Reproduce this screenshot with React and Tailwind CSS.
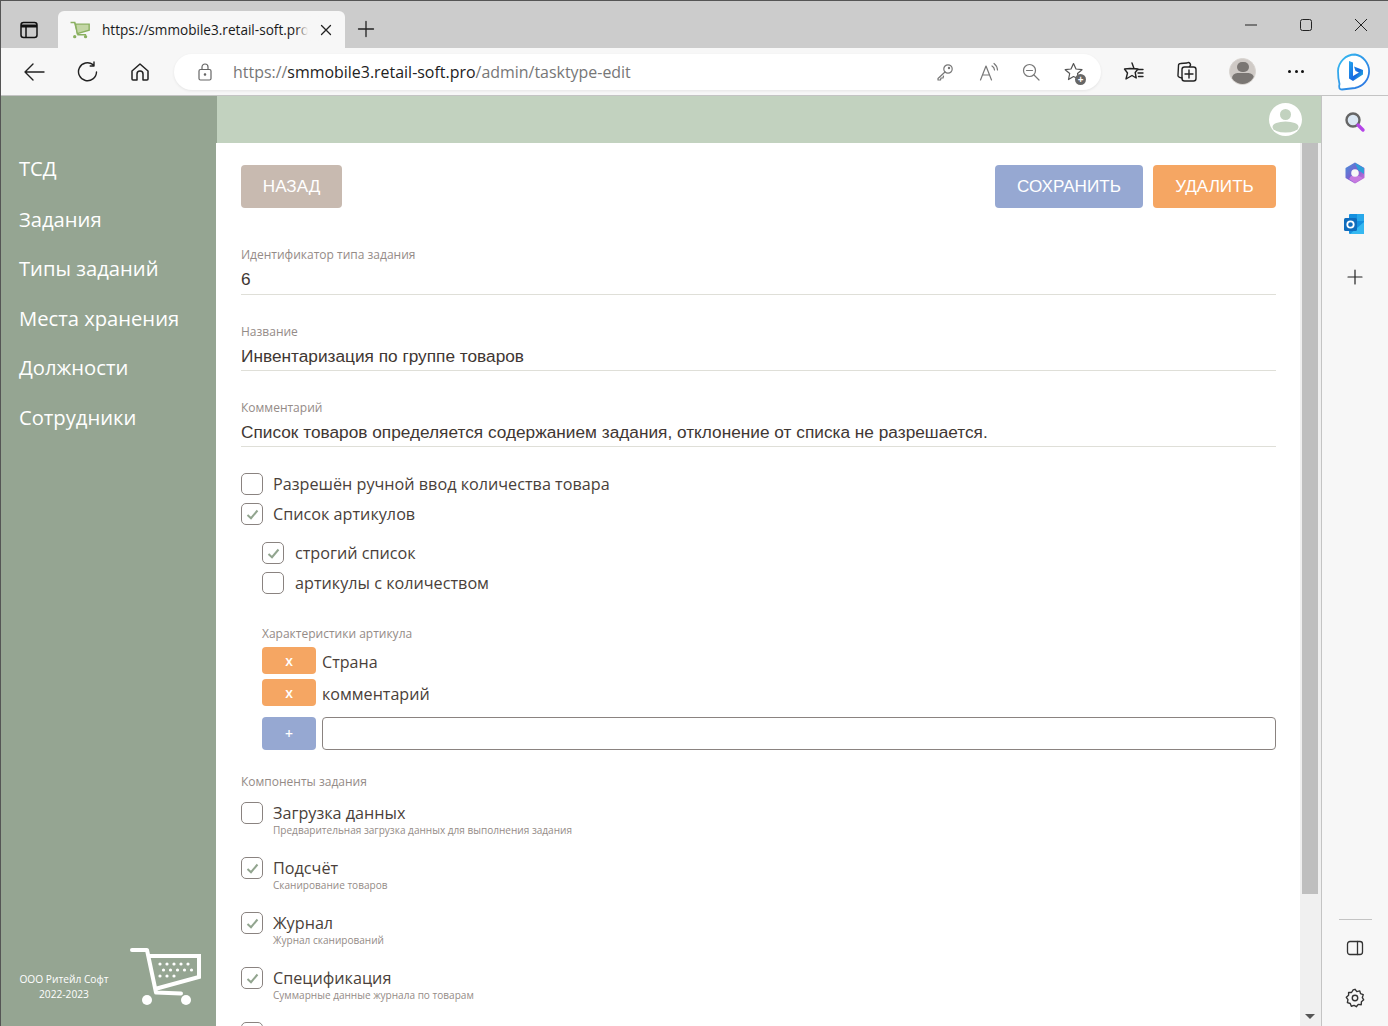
import { useState } from 'react'

const SANS = "font-['Open_Sans','Noto_Sans',sans-serif]"
const ARIAL = "font-['Liberation_Sans',sans-serif]"

const NAV = [
  { label: 'ТСД', cls: 'h-[51px] pb-[3px]' },
  { label: 'Задания', cls: 'h-[49px] pb-[1px]' },
  { label: 'Типы заданий', cls: 'h-[50px] pb-[1px]' },
  { label: 'Места хранения', cls: 'h-[49px] pb-[1px]' },
  { label: 'Должности', cls: 'h-[50px] pb-[1px]' },
  { label: 'Сотрудники', cls: 'h-[50px] pb-[2px]' },
]

const COMPONENTS = [
  { title: 'Загрузка данных', sub: 'Предварительная загрузка данных для выполнения задания', on: false },
  { title: 'Подсчёт', sub: 'Сканирование товаров', on: true },
  { title: 'Журнал', sub: 'Журнал сканирований', on: true },
  { title: 'Спецификация', sub: 'Суммарные данные журнала по товарам', on: true },
]

function Stroke({ size = 24, box = 24, width = 1.5, color = 'currentColor', children }) {
  return (
    <svg width={size} height={size} viewBox={`0 0 ${box} ${box}`} fill="none" stroke={color} strokeWidth={width} strokeLinecap="round" strokeLinejoin="round">
      {children}
    </svg>
  )
}

function CartLogo() {
  const dots = []
  for (let r = 0; r < 3; r++) {
    for (let c = 0; c < 5; c++) {
      if (r === 2 && c > 2) continue
      dots.push(<circle key={r + '-' + c} cx={30 + c * 7 + (r === 1 ? 3.5 : 0)} cy={18 + r * 6} r="1.6" fill="white" />)
    }
  }
  return (
    <svg width="72" height="60" viewBox="0 0 72 60">
      <path d="M2 4 H17 L26 46.5 L51 47.5" fill="none" stroke="white" strokeWidth="4" strokeLinecap="round" strokeLinejoin="round" />
      <path d="M19 10 H69 V31 L25 43" fill="none" stroke="white" strokeWidth="4" />
      {dots}
      <circle cx="17" cy="54" r="5" fill="white" />
      <circle cx="56" cy="54" r="5" fill="white" />
    </svg>
  )
}

function Box({ on }) {
  return (
    <span className="flex h-[22px] w-[22px] shrink-0 items-center justify-center rounded-[5px] border border-[#8a8380] bg-white">
      {on && (
        <svg width="13" height="11" viewBox="0 0 13 11" fill="none" stroke="#92a58f" strokeWidth="2">
          <path d="M1.5 6 L5 9.2 L11.5 1.5" />
        </svg>
      )}
    </span>
  )
}

function Check({ label, on, gap = 'gap-[10px]' }) {
  return (
    <label className={`flex h-[24px] items-center text-[16.2px] text-[#4a3f3a] ${gap} ${SANS}`}>
      <Box on={on} />
      <span>{label}</span>
    </label>
  )
}

function Field({ label, value, cls }) {
  return (
    <div className={`border-b border-[#dfdfd8] ${cls}`}>
      <p className={`pt-[1px] text-[12px] leading-[16px] text-[#948b87] ${SANS}`}>{label}</p>
      <p className={`mt-[4px] h-[24px] text-[17.25px] leading-[24px] text-[#3f3733] ${ARIAL}`}>{value}</p>
    </div>
  )
}

function Feature({ label }) {
  return (
    <div className="flex h-[27px] items-center gap-[6px]">
      <button className={`h-[27px] w-[54px] rounded-[4px] bg-[#f5a663] text-[14px] font-semibold text-white ${SANS}`}>x</button>
      <span className={`pt-[3px] text-[16.1px] text-[#4a3f3a] ${SANS}`}>{label}</span>
    </div>
  )
}

export default function App() {
  const [attr, setAttr] = useState('')

  return (
    <div className="flex h-[1026px] w-[1388px] flex-col overflow-hidden border-l border-t border-[#555] bg-white">
      {/* title bar */}
      <div className="flex h-[47px] shrink-0 items-end bg-[#cccccc]">
        <div className="mb-[6px] ml-[19px] mr-[18px] flex h-[24px] w-[20px] items-center">
          <svg width="18" height="18" viewBox="0 0 18 18" fill="none" stroke="#111" strokeWidth="1.5">
            <rect x="1" y="1.5" width="16" height="15" rx="2.5" />
            <path d="M1 5 H17" strokeWidth="3" />
            <path d="M6 5 V16.5" />
          </svg>
        </div>
        <div className="relative flex h-[37px] w-[287px] items-center rounded-t-[6px] bg-[#f7f7f7] pl-[12px]">
          <svg width="20" height="20" viewBox="0 0 72 60" className="shrink-0">
            <path d="M2 3 H17 L29 47 H58" fill="none" stroke="#8ab060" strokeWidth="6" />
            <path d="M20 9 H69 V31 L26 43 Z" fill="#c3d6a5" stroke="#8ab060" strokeWidth="5" />
            <circle cx="17" cy="54" r="6" fill="#8ab060" />
            <circle cx="56" cy="54" r="6" fill="#8ab060" />
          </svg>
          <span className={`ml-[12px] whitespace-nowrap pt-[1px] text-[13.6px] text-[#1a1a1a] ${SANS}`}>https://smmobile3.retail-soft.pro/</span>
          <span className="absolute left-[238px] top-0 h-full w-[24px] bg-gradient-to-r from-transparent via-[#f7f7f7] to-[#f7f7f7]" />
          <span className="absolute left-[262px] top-[13px] text-[#222]">
            <Stroke size={12} box={12} width={1.3}><path d="M1.5 1.5 L10.5 10.5 M10.5 1.5 L1.5 10.5" /></Stroke>
          </span>
        </div>
        <div className="mb-[10px] ml-[12px] flex-1 text-[#222]">
          <Stroke size={18} box={18} width={1.3}><path d="M9 1.5 V16.5 M1.5 9 H16.5" /></Stroke>
        </div>
        <div className="mb-[17px] flex items-center text-[#222]">
          <span className="flex w-[55px] justify-center"><svg width="12" height="12" viewBox="0 0 12 12" stroke="#222"><path d="M0 6 H12" /></svg></span>
          <span className="flex w-[55px] justify-center"><svg width="12" height="12" viewBox="0 0 12 12" fill="none" stroke="#222"><rect x="0.5" y="0.5" width="11" height="11" rx="2" /></svg></span>
          <span className="flex w-[55px] justify-center"><svg width="12" height="12" viewBox="0 0 12 12" fill="none" stroke="#222"><path d="M0 0 L12 12 M12 0 L0 12" /></svg></span>
        </div>
      </div>

      {/* toolbar */}
      <div className="flex h-[48px] shrink-0 items-center border-b border-[#c4c4c4] bg-[#f7f7f7]">
        <span className="ml-[22px] text-[#222]">
          <Stroke size={22} box={22} width={1.4}><path d="M2 11 H21 M10 3 L2 11 L10 19" /></Stroke>
        </span>
        <span className="ml-[32px] text-[#222]">
          <Stroke size={22} box={22} width={1.4}><path d="M19.5 11 A9 9 0 1 1 16 3.6 M17 1 V5 H13.2" /></Stroke>
        </span>
        <span className="ml-[31px] text-[#222]">
          <Stroke size={20} box={20} width={1.5}><path d="M2 9 L10 2 L18 9 V17 A1 1 0 0 1 17 18 H13 V12 A3 3 0 0 0 7 12 V18 H3 A1 1 0 0 1 2 17 Z" /></Stroke>
        </span>
        <div className="ml-[24px] flex h-[36px] w-[927px] items-center rounded-full bg-white shadow-[0_1px_3px_rgba(0,0,0,0.08)]">
          <span className="ml-[22px] text-[#666]">
            <Stroke size={18} box={18} width={1.2}><rect x="3" y="6.5" width="12" height="10.5" rx="1.5" /><path d="M6 6.5 V4 A3 3 0 0 1 12 4 V6.5" /><circle cx="9" cy="11.5" r="0.7" fill="#666" /></Stroke>
          </span>
          <span className={`ml-[19px] flex-1 pt-[2px] text-[15.95px] text-[#777] ${SANS}`}>https://<span className="text-[#222]">smmobile3.retail-soft.pro</span>/admin/tasktype-edit</span>
          <span className="text-[#777]">
            <Stroke size={18} box={18} width={1.2}><circle cx="12" cy="6" r="4.2" /><path d="M9 9 L2 15.5 V17 H4.5 L5 15 H7 L7.5 13" /><circle cx="13" cy="5" r="0.6" /></Stroke>
          </span>
          <span className="ml-[25px] text-[#777]">
            <Stroke size={20} box={20} width={1.2}><path d="M1.5 18 L7 4 L12.5 18 M3.5 13 H10.5 M13 4 A5 5 0 0 1 15.5 8 M15 1.5 A9 9 0 0 1 18.5 8" /></Stroke>
          </span>
          <span className="ml-[23px] text-[#777]">
            <Stroke size={18} box={18} width={1.2}><circle cx="7.5" cy="7.5" r="6" /><path d="M4.5 7.5 H10.5 M12 12 L17 17" /></Stroke>
          </span>
          <span className="relative ml-[24px] text-[#555]">
            <Stroke size={20} box={20} width={1.2}><path d="M9.5 1.5 L12 7 L18 7.7 L13.5 11.5 L14.5 17 L9.5 14.5 L4.5 17.5 L5.7 11.5 L1.2 7.7 L7 7 Z" /></Stroke>
            <span className="absolute -bottom-[3px] -right-[2px] flex h-[11px] w-[11px] items-center justify-center rounded-full bg-[#666] text-[10px] font-bold leading-none text-white">+</span>
          </span>
          <span className="w-[17px]" />
        </div>
        <span className="ml-[22px] text-[#222]">
          <Stroke size={22} box={22} width={1.4}><path d="M9 2 L11 7.5 L15 8 M15 8 L12.2 11.5 L13.2 17 L9 14.5 L3 18 L4.5 12 L1.5 8 L7 7.5 Z M15.5 8.5 H20 M15 12 H20 M15.5 15.5 H20" /></Stroke>
        </span>
        <span className="ml-[31px] text-[#222]">
          <Stroke size={22} box={22} width={1.4}><path d="M6 17 L3.5 16.3 A2 2 0 0 1 2 14 L2.5 4.5 A2 2 0 0 1 4.5 2.5 L11 2 A2 2 0 0 1 13.5 5.5" /><rect x="6" y="6" width="14" height="14" rx="2.5" /><path d="M13 9 V17 M9 13 H17" /></Stroke>
        </span>
        <span className="ml-[31px] flex h-[27px] w-[27px] flex-col items-center overflow-hidden rounded-full border border-[#d8d4d0] bg-[#cfcac6]">
          <span className="mt-[3px] h-[12px] w-[12px] rounded-full bg-[#7a7673]" />
          <span className="mt-[1px] h-[14px] w-[22px] rounded-full bg-[#7a7673]" />
        </span>
        <span className="ml-[32px] flex w-[16px] justify-between">
          <span className="h-[3px] w-[3px] rounded-full bg-[#111]" />
          <span className="h-[3px] w-[3px] rounded-full bg-[#111]" />
          <span className="h-[3px] w-[3px] rounded-full bg-[#111]" />
        </span>
        <span className="ml-[32px]">
          <svg width="37" height="38" viewBox="0 0 37 38">
            <defs>
              <linearGradient id="bingRing" x1="0" y1="0" x2="1" y2="1">
                <stop offset="0" stopColor="#36bdf0" />
                <stop offset="1" stopColor="#2a6fe0" />
              </linearGradient>
              <linearGradient id="bingB" x1="0" y1="0" x2="1" y2="1">
                <stop offset="0" stopColor="#23a6ee" />
                <stop offset="0.6" stopColor="#1668e0" />
                <stop offset="1" stopColor="#2bd0d8" />
              </linearGradient>
            </defs>
            <path d="M19 1.5 A17 17 0 0 1 19 35 L6 36.5 Q2 36.5 3.5 31 Q2 25 2 18 A17 17 0 0 1 19 1.5 Z" fill="white" stroke="url(#bingRing)" strokeWidth="1.8" />
            <path d="M13 8 L17 9.5 V23 L23 19.5 L19.5 18 L18 13.5 L27 17 V21.5 L17 28 L13 25.5 Z" fill="url(#bingB)" />
          </svg>
        </span>
      </div>

      {/* body */}
      <div className="flex min-h-0 flex-1">
        <aside className="flex w-[215px] shrink-0 flex-col bg-[#95a592]">
          <nav className="flex flex-col pt-[48px]">
            {NAV.map((item) => (
              <a key={item.label} className={`flex items-center pl-[18px] text-[20.2px] text-white ${item.cls} ${SANS}`}>{item.label}</a>
            ))}
          </nav>
          <div className="mt-auto flex items-end pb-[20px]">
            <div className={`mb-[4px] ml-[18px] w-[90px] text-center text-[10.2px] leading-[15px] text-white ${SANS}`}>
              <p className="whitespace-nowrap">ООО Ритейл Софт</p>
              <p>2022-2023</p>
            </div>
            <div className="ml-[21px]"><CartLogo /></div>
          </div>
        </aside>

        <div className="flex min-w-0 flex-1 flex-col">
          <header className="flex h-[47px] shrink-0 items-center justify-end border-l border-[#95a592] bg-[#c2d2bf] pr-[19px]">
            <svg width="33" height="33" viewBox="0 0 33 33">
              <circle cx="16.5" cy="16.5" r="16.5" fill="white" />
              <circle cx="16.5" cy="11.5" r="5.5" fill="#c2d2bf" />
              <ellipse cx="16.5" cy="24" rx="13" ry="5.6" fill="#c2d2bf" />
            </svg>
          </header>

          <div className="flex min-h-0 flex-1">
            <main className="min-w-0 flex-1 overflow-hidden pl-[25px] pr-[24px] pt-[22px]">
              <div className="flex h-[43px] justify-between">
                <button className={`h-[43px] w-[101px] rounded-[4px] bg-[#c8bab0] text-[17.1px] text-white ${ARIAL}`}>НАЗАД</button>
                <div className="flex gap-[10px]">
                  <button className={`h-[43px] w-[148px] rounded-[4px] bg-[#96a8d2] text-[17.1px] text-white ${ARIAL}`}>СОХРАНИТЬ</button>
                  <button className={`h-[43px] w-[123px] rounded-[4px] bg-[#f5a663] text-[17.1px] text-white ${ARIAL}`}>УДАЛИТЬ</button>
                </div>
              </div>

              <Field cls="mt-[38px] h-[49px]" label="Идентификатор типа задания" value="6" />
              <Field cls="mt-[28px] h-[48px]" label="Название" value="Инвентаризация по группе товаров" />
              <Field cls="mt-[28px] h-[48px]" label="Комментарий" value="Список товаров определяется содержанием задания, отклонение от списка не разрешается." />

              <div className="mt-[25px] flex flex-col gap-[6px]">
                <Check label="Разрешён ручной ввод количества товара" />
                <Check label="Список артикулов" on />
              </div>
              <div className="ml-[21px] mt-[15px] flex flex-col gap-[6px]">
                <Check gap="gap-[11px]" label="строгий список" on />
                <Check gap="gap-[11px]" label="артикулы с количеством" />
              </div>

              <div className="ml-[21px] mt-[31px]">
                <p className={`text-[12px] leading-[16px] text-[#948b87] ${SANS}`}>Характеристики артикула</p>
                <div className="mt-[5px] flex flex-col gap-[5px]">
                  <Feature label="Страна" />
                  <Feature label="комментарий" />
                </div>
                <div className="mt-[11px] flex h-[33px] gap-[6px]">
                  <button className={`h-[33px] w-[54px] shrink-0 rounded-[4px] bg-[#96a8d2] text-[14px] font-semibold text-white ${SANS}`}>+</button>
                  <input value={attr} onChange={(e) => setAttr(e.target.value)} className="h-[33px] min-w-0 flex-1 rounded-[4px] border border-[#8a8380] bg-white px-2 text-[16px] outline-none" />
                </div>
              </div>

              <p className={`mt-[24px] text-[12px] leading-[16px] text-[#948b87] ${SANS}`}>Компоненты задания</p>
              <div className="mt-[12px] flex flex-col gap-[21px]">
                {COMPONENTS.map((c) => (
                  <div key={c.title} className="flex h-[34px] gap-[10px]">
                    <Box on={c.on} />
                    <div className={SANS}>
                      <p className="text-[16.2px] leading-[22px] text-[#4a3f3a]">{c.title}</p>
                      <p className="text-[10.05px] leading-[12px] text-[#948b87]">{c.sub}</p>
                    </div>
                  </div>
                ))}
                <Box />
              </div>
            </main>

            {/* page scrollbar */}
            <div className="flex w-[21px] shrink-0 flex-col bg-[#f0f0f0] pl-[2px]">
              <div className="h-[751px] w-[16px] bg-[#bfbfbf]" />
              <div className="mb-[7px] ml-[3px] mt-auto h-0 w-0 border-x-[5px] border-t-[5px] border-x-transparent border-t-[#555]" />
            </div>
          </div>
        </div>

        {/* edge sidebar */}
        <div className="flex w-[67px] shrink-0 flex-col items-center border-l border-[#c4c4c4] bg-[#f7f7f7] pt-[14px]">
          <svg width="24" height="24" viewBox="0 0 24 24" fill="none">
            <circle cx="10" cy="10" r="6.5" fill="#dbe7f3" stroke="#666" strokeWidth="2.4" />
            <path d="M15 15 L20 20" stroke="#b545e8" strokeWidth="3.4" strokeLinecap="round" />
          </svg>
          <svg className="mt-[27px]" width="24" height="24" viewBox="0 0 24 24" fill="none">
            <defs>
              <linearGradient id="m365" x1="0" y1="0" x2="1" y2="1">
                <stop offset="0" stopColor="#4a8fd8" />
                <stop offset="0.5" stopColor="#7b5fd0" />
                <stop offset="1" stopColor="#d070d8" />
              </linearGradient>
            </defs>
            <path d="M12 2.5 L20.5 7.5 V16.5 L12 21.5 L3.5 16.5 V7.5 Z" fill="url(#m365)" stroke="url(#m365)" strokeWidth="2" strokeLinejoin="round" />
            <path d="M12 2 L21 7 V13 L15 9 Z" fill="#2f9fd8" />
            <path d="M8 15 L16 15 L20 17 L12 22 L6 18 Z" fill="#c77ae0" />
            <circle cx="12" cy="12" r="3.8" fill="#f7f7f7" />
          </svg>
          <svg className="mt-[27px]" width="24" height="24" viewBox="0 0 24 24" fill="none">
            <rect x="6" y="2" width="15" height="20" rx="1" fill="#1490df" />
            <path d="M14 2 H21 V9 H14 Z" fill="#28a8ea" />
            <path d="M21 10 V21 A1 1 0 0 1 20 22 H7 Z" fill="#35b8f1" />
            <rect x="1" y="6" width="13" height="13" rx="1.5" fill="#0f6cbd" />
            <circle cx="7.5" cy="12.5" r="3.2" fill="none" stroke="white" strokeWidth="1.8" />
          </svg>
          <span className="mt-[33px] text-[#222]">
            <Stroke size={16} box={16} width={1.2}><path d="M8 1 V15 M1 8 H15" /></Stroke>
          </span>
          <div className="mt-auto h-px w-[33px] bg-[#c4c4c4]" />
          <span className="mt-[19px] text-[#333]">
            <Stroke size={18} box={18} width={1.3}><rect x="1.5" y="2.5" width="15" height="13" rx="2.5" /><path d="M11.5 2.5 V15.5" /></Stroke>
          </span>
          <span className="mb-[17px] mt-[30px] text-[#333]">
            <Stroke size={22} box={24} width={1.5}>
              <circle cx="12" cy="12" r="3" />
              <path d="M12 2.5 L14 5 L17.2 4.2 L18 7.3 L21 8.3 L20 11.5 L21.5 14 L19 16 L18.8 19.3 L15.5 19 L13.5 21.5 L11 20 L8 21 L6.8 18 L3.7 17 L4.3 13.8 L2.5 11.2 L5 9 L5 6 L8.2 6 L10 3.2 Z" />
            </Stroke>
          </span>
        </div>
      </div>
    </div>
  )
}
